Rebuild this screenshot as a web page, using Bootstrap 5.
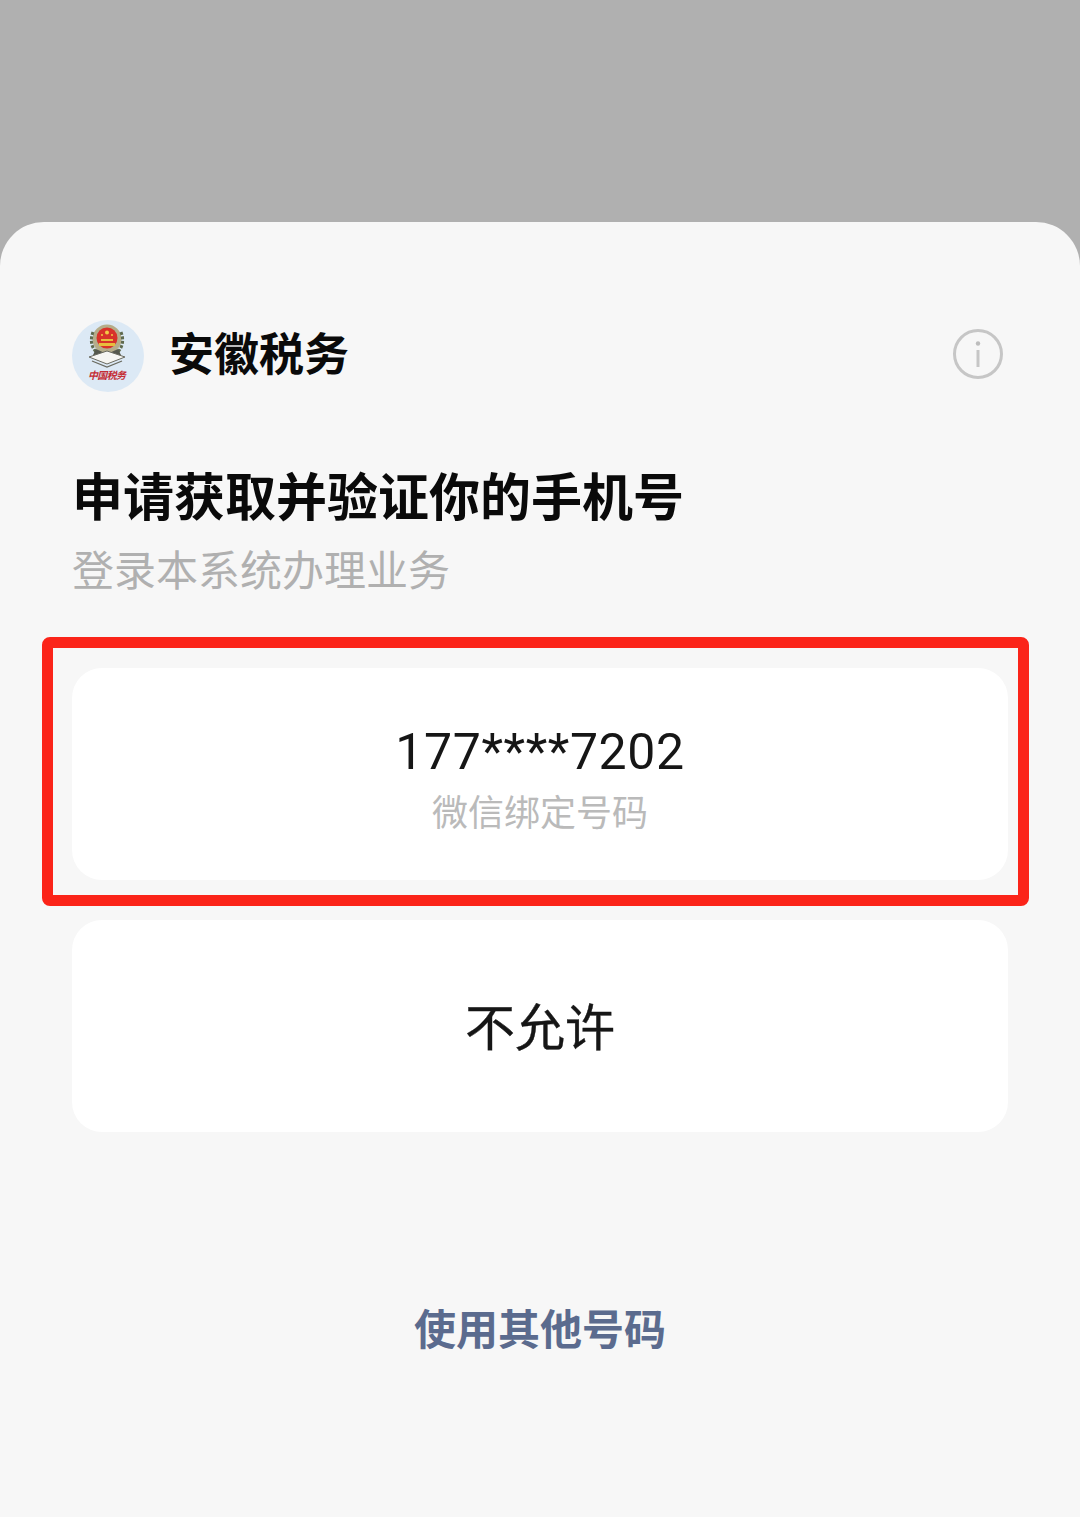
<!DOCTYPE html>
<html lang="zh-CN">
<head>
    <meta charset="UTF-8">
    <meta name="viewport" content="width=device-width, initial-scale=1.0">
    <title>安徽税务</title>
    <link href="https://cdn.jsdelivr.net/npm/bootstrap@5.3.3/dist/css/bootstrap.min.css" rel="stylesheet">
    <script src="https://cdn.jsdelivr.net/npm/bootstrap@5.3.3/dist/js/bootstrap.bundle.min.js"></script>
    <style>
        html, body { height: 100%; }
        body {
            background: #b0b0b0;
            font-family: "Liberation Sans", "Noto Sans CJK SC", sans-serif;
            overflow: hidden;
        }
        .sheet {
            margin-top: 222px;
            height: 1295px;
            background: #f7f7f7;
            border-radius: 44px 44px 0 0;
            padding: 100px 72px 0;
        }
        .app-row { height: 68px; }
        .app-logo {
            width: 72px;
            height: 72px;
            flex-shrink: 0;
            margin-right: 25px;
        }
        .app-name {
            font-size: 45px;
            font-weight: 700;
            color: #0a0a0a;
            line-height: 68px;
        }
        .info-ic { width: 52px; height: 52px; margin: 0 4px 4px 0; }
        .ask-title {
            margin-top: 73px;
            font-size: 51px;
            font-weight: 700;
            line-height: 72px;
            color: #0a0a0a;
        }
        .ask-sub {
            margin-top: 1px;
            font-size: 42px;
            line-height: 72px;
            color: #b0b0b0;
        }
        .choice-wrap { position: relative; margin-top: 60px; }
        .choice {
            height: 212px;
            background: #fff;
            border-radius: 30px;
            color: #161616;
        }
        .choice-info { padding-top: 12px; }
        .choice-num {
            font-family: "Roboto", "Noto Sans CJK SC", sans-serif;
            font-size: 50px;
            line-height: 60px;
            letter-spacing: 0.6px;
        }
        .choice-note {
            font-size: 36px;
            line-height: 50px;
            margin-top: 7px;
            color: #bababa;
        }
        .red-frame {
            position: absolute;
            left: -30px;
            right: -21px;
            top: -31px;
            bottom: -26px;
            border: 11px solid #fb2419;
            border-radius: 8px;
        }
        .deny { margin-top: 40px; padding-top: 6px; font-size: 50px; -webkit-text-stroke: 0.4px #161616; }
        .other-num {
            margin-top: 169px;
            font-size: 42px;
            font-weight: 700;
            line-height: 60px;
            color: #5b6b8e;
        }
        .logo-txt {
            font-family: "Noto Sans CJK SC", sans-serif;
            font-size: 10px;
            font-weight: 700;
            font-style: italic;
            fill: #c42d35;
        }
    </style>
</head>
<body>
    <div class="sheet">
        <div class="app-row d-flex align-items-center">
            <svg class="app-logo" viewBox="0 0 72 72" aria-label="logo">
                <circle cx="36" cy="36" r="36" fill="#dce9f5"/>
                <!-- laurel round the emblem -->
                <circle cx="35" cy="19" r="14.5" fill="#b5ad8a"/>
                <path d="M21 12c-3 8-2 15 4 21M49 12c3 8 2 15-4 21" fill="none" stroke="#5f6a4e" stroke-width="3" stroke-dasharray="3 1.5"/>
                <circle cx="35" cy="18" r="10.5" fill="#d8322a"/>
                <circle cx="35" cy="12.5" r="2" fill="#f2cb45"/>
                <circle cx="30" cy="15" r="1" fill="#f2cb45"/>
                <circle cx="40" cy="15" r="1" fill="#f2cb45"/>
                <path d="M29 19h12v2H29zM27 23h16v3H27z" fill="#e8bd3d"/>
                <path d="M24 29l11 5 11-5 3 6-14 7-14-7z" fill="#55584d"/>
                <path d="M17 37l18-6 18 6-18 7z" fill="#f6f6f2" stroke="#6a6b60" stroke-width="1"/>
                <path d="M20 41l15 6 15-6" fill="none" stroke="#6a6b60" stroke-width="1.3"/>
                <text class="logo-txt" x="16" y="59" textLength="38">中国税务</text>
            </svg>
            <div class="app-name">安徽税务</div>
            <svg class="info-ic ms-auto" viewBox="0 0 52 52" aria-label="info">
                <circle cx="26" cy="26" r="23.5" fill="none" stroke="#c6c6c6" stroke-width="3"/>
                <circle cx="26" cy="15.5" r="2.2" fill="#bdbdbd"/>
                <path d="M26 22v17" stroke="#c6c6c6" stroke-width="3"/>
            </svg>
        </div>
        <div class="ask-title">申请获取并验证你的手机号</div>
        <div class="ask-sub">登录本系统办理业务</div>
        <div class="choice-wrap">
            <div class="choice choice-info d-flex flex-column align-items-center justify-content-center">
                <div class="choice-num">177****7202</div>
                <div class="choice-note">微信绑定号码</div>
            </div>
            <div class="red-frame"></div>
        </div>
        <div class="choice deny d-flex align-items-center justify-content-center">不允许</div>
        <div class="other-num text-center">使用其他号码</div>
    </div>
</body>
</html>
